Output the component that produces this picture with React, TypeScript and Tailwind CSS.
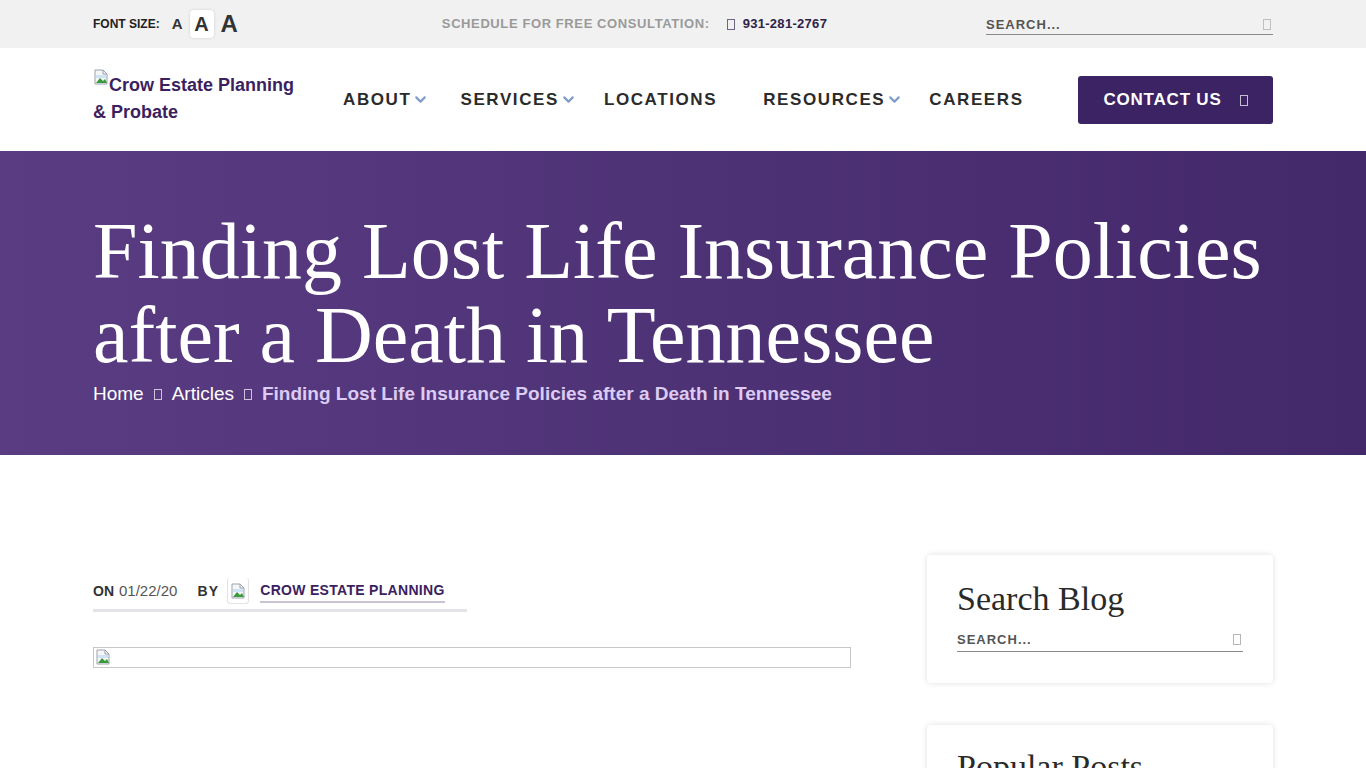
import { ChevronDown } from "lucide-react";

const sans = "font-['Liberation_Sans',Arial,sans-serif]";
const serif = "font-['Liberation_Serif','Times_New_Roman',serif]";

function Tofu({ className = "" }: { className?: string }) {
  return (
    <span
      className={`inline-block h-[11px] w-[8px] border border-current opacity-70 ${className}`}
    />
  );
}

function BrokenImg({ className = "" }: { className?: string }) {
  return (
    <svg viewBox="0 0 16 16" className={`h-4 w-4 ${className}`}>
      <path d="M2 1h8l4 4v10H2z" fill="#f4f6f8" stroke="#9aa3ad" strokeWidth="1" />
      <path d="M10 1v4h4" fill="none" stroke="#9aa3ad" strokeWidth="1" />
      <path d="M3 14l4-5 3 3 2-2 2 4z" fill="#3c9a3c" />
      <rect x="3" y="6" width="10" height="3" fill="#cfe3f5" />
    </svg>
  );
}

function TopBar() {
  return (
    <div className={`h-12 bg-[#f1f1f1] ${sans}`}>
      <div className="mx-auto flex h-full max-w-[1180px] items-center">
        <div className="flex items-center">
          <span className="text-[12px] font-bold text-[#222]">FONT SIZE:</span>
          <span className="ml-3 text-[15px] font-bold text-[#333]">A</span>
          <span className="ml-[7px] flex h-7 w-6 items-center justify-center rounded-sm bg-white text-[20px] font-bold text-[#333] shadow-[0_0_3px_rgba(0,0,0,0.15)]">
            A
          </span>
          <span className="ml-[7px] text-[24px] font-bold leading-none text-[#333]">A</span>
        </div>
        <div className="ml-[204px] flex items-center">
          <span className="text-[13px] font-bold tracking-[0.6px] text-[#9a9a9a]">
            SCHEDULE FOR FREE CONSULTATION:
          </span>
          <Tofu className="ml-[17px] text-[#3a2a5a]" />
          <span className="ml-2 text-[13px] font-bold tracking-[0.3px] text-[#2e2248]">
            931-281-2767
          </span>
        </div>
        <div className="ml-auto flex h-[22px] w-[287px] items-center justify-between border-b border-[#8a8a8a] pt-[2px]">
          <span className="text-[13px] font-bold tracking-[1px] text-[#555]">SEARCH...</span>
          <Tofu className="mr-[2px] text-[#aaa]" />
        </div>
      </div>
    </div>
  );
}

function NavItem({ label, drop }: { label: string; drop?: boolean }) {
  return (
    <div className="flex items-center">
      <span className="text-[17px] font-bold tracking-[1.6px] text-[#2b2b2b]">{label}</span>
      {drop && <ChevronDown className="ml-[1px] h-[17px] w-[17px] text-[#7f9ccb]" strokeWidth={3} />}
    </div>
  );
}

function Header() {
  return (
    <div className={`h-[103px] bg-white ${sans}`}>
      <div className="mx-auto flex h-full max-w-[1180px] items-center">
        <div className="w-[250px] pb-1 text-[18px] font-bold leading-[27px] text-[#3b1f5e]">
          <BrokenImg className="inline-block align-[6px]" />
          Crow Estate Planning
          <br />& Probate
        </div>
        <div className="flex items-center">
          <NavItem label="ABOUT" drop />
          <div className="ml-[31px]">
            <NavItem label="SERVICES" drop />
          </div>
          <div className="ml-[27px]">
            <NavItem label="LOCATIONS" />
          </div>
          <div className="ml-[46px]">
            <NavItem label="RESOURCES" drop />
          </div>
          <div className="ml-[26px]">
            <NavItem label="CAREERS" />
          </div>
        </div>
        <button className="ml-auto flex h-12 w-[195px] items-center justify-center rounded-[3px] bg-[#3c2363] text-[17px] font-bold tracking-[0.8px] text-white">
          CONTACT US
          <Tofu className="ml-[18px] mt-[1px] text-white" />
        </button>
      </div>
    </div>
  );
}

function Hero() {
  return (
    <div className="h-[304px] bg-gradient-to-r from-[#5a3c82] via-[#4e3276] to-[#43286a]">
      <div className="mx-auto max-w-[1180px] pt-[58px]">
        <h1 className={`${serif} text-[80px] leading-[84px] text-white`}>
          Finding Lost Life Insurance Policies after a Death in Tennessee
        </h1>
        <div className={`${sans} mt-[3px] flex items-center text-[19px] text-white`}>
          <span>Home</span>
          <Tofu className="mx-[10px] h-[8px] w-[7px]" />
          <span>Articles</span>
          <Tofu className="mx-[10px] h-[8px] w-[7px]" />
          <span className="font-bold text-[#dccbf2]">
            Finding Lost Life Insurance Policies after a Death in Tennessee
          </span>
        </div>
      </div>
    </div>
  );
}

function SearchCard() {
  return (
    <div className="rounded-[4px] bg-white px-[30px] pb-[31px] pt-[24px] shadow-[0_0_6px_rgba(0,0,0,0.13)]">
      <div className={`${serif} text-[34px] leading-[40px] text-[#2a2a2a]`}>Search Blog</div>
      <div className={`${sans} mt-[9px] flex h-[24px] items-center justify-between border-b border-[#8a8a8a]`}>
        <span className="text-[13px] font-bold tracking-[1px] text-[#555]">SEARCH...</span>
        <Tofu className="mr-[2px] text-[#999]" />
      </div>
    </div>
  );
}

function Content() {
  return (
    <div className="mx-auto flex max-w-[1180px] gap-[76px] pt-[100px]">
      <div className={`w-[758px] pt-[23px] ${sans}`}>
        <div className="flex w-[374px] items-center border-b-[3px] border-[#e3e3ea] pb-[5px]">
          <span className="text-[14px] font-bold text-[#333]">ON</span>
          <span className="ml-[5px] text-[15px] text-[#555]">01/22/20</span>
          <span className="ml-[20px] text-[14px] font-bold tracking-[1.2px] text-[#333]">BY</span>
          <span className="ml-[8px] flex h-[26px] w-[22px] items-center justify-center rounded-[3px] border-x border-b border-[#e2e2e2]">
            <BrokenImg />
          </span>
          <span className="ml-[11px] border-b-2 border-[#c9c3d4] text-[14px] font-bold tracking-[0.3px] text-[#3b2160]">
            CROW ESTATE PLANNING
          </span>
        </div>
        <div className="mt-[35px] h-[21px] w-full border border-[#c8c8c8] pl-[1px] pt-[1px]">
          <BrokenImg />
        </div>
      </div>
      <div className="w-[346px] flex-none">
        <SearchCard />
        <div className="mt-[42px] h-[60px] rounded-[4px] bg-white px-[30px] pt-[22px] shadow-[0_0_6px_rgba(0,0,0,0.13)]">
          <div className={`${serif} text-[34px] leading-[40px] text-[#2a2a2a]`}>Popular Posts</div>
        </div>
      </div>
    </div>
  );
}

export default function App() {
  return (
    <div className="h-[768px] overflow-hidden bg-white">
      <TopBar />
      <Header />
      <Hero />
      <Content />
    </div>
  );
}
